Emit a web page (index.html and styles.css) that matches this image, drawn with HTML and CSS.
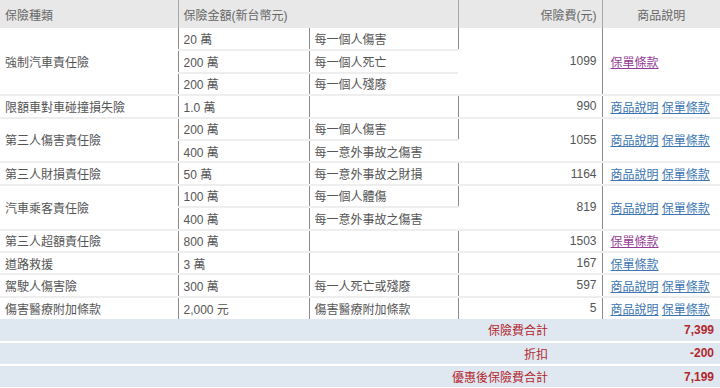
FILE: index.html
```html
<!DOCTYPE html>
<html lang="zh-Hant">
<head>
<meta charset="utf-8">
<title>保險明細</title>
<link rel="stylesheet" href="styles.css">
</head>
<body>
<table class="ins">
  <colgroup>
    <col class="c1"><col class="c2"><col class="c3"><col class="c4"><col class="c5">
  </colgroup>
  <thead>
    <tr>
      <th class="sep">保險種類</th>
      <th class="sep" colspan="2">保險金額(新台幣元)</th>
      <th class="sep num">保險費(元)</th>
      <th class="center">商品說明</th>
    </tr>
  </thead>
  <tbody>
    <tr>
      <td rowspan="3">強制汽車責任險</td>
      <td>20 萬</td>
      <td>每一個人傷害</td>
      <td rowspan="3" class="num">1099</td>
      <td rowspan="3" class="links"><a href="#" class="visited">保單條款</a></td>
    </tr>
    <tr><td>200 萬</td><td>每一個人死亡</td></tr>
    <tr><td>200 萬</td><td>每一個人殘廢</td></tr>
    <tr>
      <td>限額車對車碰撞損失險</td><td>1.0 萬</td><td></td><td class="num">990</td>
      <td class="links"><a href="#">商品說明</a> <a href="#">保單條款</a></td>
    </tr>
    <tr>
      <td rowspan="2">第三人傷害責任險</td><td>200 萬</td><td>每一個人傷害</td>
      <td rowspan="2" class="num">1055</td>
      <td rowspan="2" class="links"><a href="#">商品說明</a> <a href="#">保單條款</a></td>
    </tr>
    <tr><td>400 萬</td><td>每一意外事故之傷害</td></tr>
    <tr>
      <td>第三人財損責任險</td><td>50 萬</td><td>每一意外事故之財損</td><td class="num">1164</td>
      <td class="links"><a href="#">商品說明</a> <a href="#">保單條款</a></td>
    </tr>
    <tr>
      <td rowspan="2">汽車乘客責任險</td><td>100 萬</td><td>每一個人體傷</td>
      <td rowspan="2" class="num">819</td>
      <td rowspan="2" class="links"><a href="#">商品說明</a> <a href="#">保單條款</a></td>
    </tr>
    <tr><td>400 萬</td><td>每一意外事故之傷害</td></tr>
    <tr>
      <td>第三人超額責任險</td><td>800 萬</td><td></td><td class="num">1503</td>
      <td class="links"><a href="#" class="visited">保單條款</a></td>
    </tr>
    <tr>
      <td>道路救援</td><td>3 萬</td><td></td><td class="num">167</td>
      <td class="links"><a href="#">保單條款</a></td>
    </tr>
    <tr>
      <td>駕駛人傷害險</td><td>300 萬</td><td>每一人死亡或殘廢</td><td class="num">597</td>
      <td class="links"><a href="#">商品說明</a> <a href="#">保單條款</a></td>
    </tr>
    <tr>
      <td>傷害醫療附加條款</td><td>2,000 元</td><td>傷害醫療附加條款</td><td class="num">5</td>
      <td class="links"><a href="#">商品說明</a> <a href="#">保單條款</a></td>
    </tr>
  </tbody>
  <tfoot>
    <tr><td colspan="4" class="sum-label">保險費合計</td><td class="sum-val">7,399</td></tr>
    <tr><td colspan="4" class="sum-label">折扣</td><td class="sum-val">-200</td></tr>
    <tr><td colspan="4" class="sum-label">優惠後保險費合計</td><td class="sum-val">7,199</td></tr>
  </tfoot>
</table>
</body>
</html>
```

FILE: styles.css
```css
html, body {
  margin: 0;
  padding: 0;
  background: #ffffff;
}

body {
  font-family: "Liberation Sans", "Noto Sans CJK TC", sans-serif;
  font-size: 12px;
  color: #555555;
}

.ins {
  width: 720px;
  table-layout: fixed;
  border-collapse: collapse;
  border-spacing: 0;
}

.c1 { width: 178px; }
.c2 { width: 131px; }
.c3 { width: 149px; }
.c4 { width: 144px; }
.c5 { width: 118px; }

.ins th {
  height: 28px;
  padding: 0 5px;
  background: #e8e8e8;
  color: #666666;
  font-weight: normal;
  text-align: left;
  vertical-align: middle;
}

.ins th.sep {
  border-right: 1px solid #a8a8a8;
}

.ins th.num { text-align: right; }
.ins th.center { text-align: center; }

.ins tbody tr {
  height: 22.4px;
}

.ins tbody td {
  padding: 0 5px;
  vertical-align: middle;
  border-bottom: 2px solid #eeeeee;
  border-right: 1px solid #8a8a8a;
  white-space: nowrap;
}

.ins tbody td:last-child {
  border-right: none;
}

.ins tbody tr:last-child td {
  border-bottom: none;
}

.ins td.num {
  text-align: right;
}

.ins td.links {
  padding-left: 8px;
  border-right: none;
}

.ins a {
  color: #3c75b1;
  text-decoration: underline;
}

.ins a.visited {
  color: #943a94;
}

.ins tfoot tr {
  height: 22.8px;
}

.ins tfoot td {
  background: #dfe8f1;
  color: #b3262c;
  border-top: 2px solid #ffffff;
  vertical-align: middle;
  padding: 0;
}

.ins tfoot tr:first-child td {
  border-top: none;
}

.sum-label {
  text-align: right;
  padding-right: 54px !important;
}

.sum-val {
  text-align: right;
  font-weight: bold;
  padding-right: 6px !important;
}
```
